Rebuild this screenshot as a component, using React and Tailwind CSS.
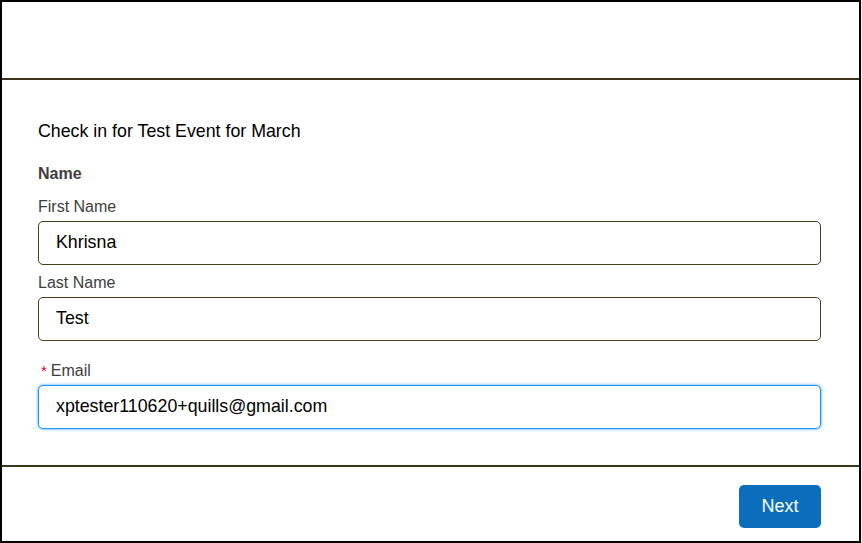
import React from 'react'

const font = { fontFamily: '"Liberation Sans", Arial, sans-serif' }

function Field({ label, value, required, focused }) {
  return (
    <div className="flex flex-col">
      <label className="flex items-center h-[22px] text-[16px] text-[#3e3e3c] leading-none">
        {required && <span className="text-[#ea001e] text-[15px] mr-[4px] ml-[3px]">*</span>}
        {label}
      </label>
      <input
        readOnly
        value={value}
        className={
          'mt-[3px] h-[44px] w-full rounded-[5px] bg-white pl-[17px] text-[17.8px] text-black outline-none ' +
          (focused
            ? 'h-[43px] border border-[#1b96ff] shadow-[0_0_3px_#1b96ff]'
            : 'border border-[#4a3d1f]')
        }
        style={font}
      />
    </div>
  )
}

export default function App() {
  return (
    <div className="h-[543px] w-[862px] bg-[#f3f3f3]" style={font}>
      <div className="flex h-full w-[861px] flex-col border-2 border-black bg-white">
        {/* Header */}
        <div className="h-[78px] border-b-2 border-[#3d3117]" />

        {/* Body */}
        <div className="flex-1 pl-[36px] pr-[38px] pt-[43px]">
          <h2 className="text-[17.8px] text-black leading-none">Check in for Test Event for March</h2>
          <div className="mt-[25px] text-[16px] font-bold text-[#3e3e3c] leading-none">Name</div>
          <div className="mt-[14px] flex flex-col gap-[7px]">
            <Field label="First Name" value="Khrisna" />
            <Field label="Last Name" value="Test" />
            <div className="mt-[12px]">
              <Field label="Email" value="xptester110620+quills@gmail.com" required focused />
            </div>
          </div>
        </div>

        {/* Footer */}
        <div className="flex h-[76px] items-center justify-end border-t-2 border-[#3d3117] pr-[38px] pt-[4px]">
          <button className="h-[43px] w-[82px] rounded-[5px] bg-[#0b6dbb] text-[18px] text-white">
            Next
          </button>
        </div>
      </div>
    </div>
  )
}
